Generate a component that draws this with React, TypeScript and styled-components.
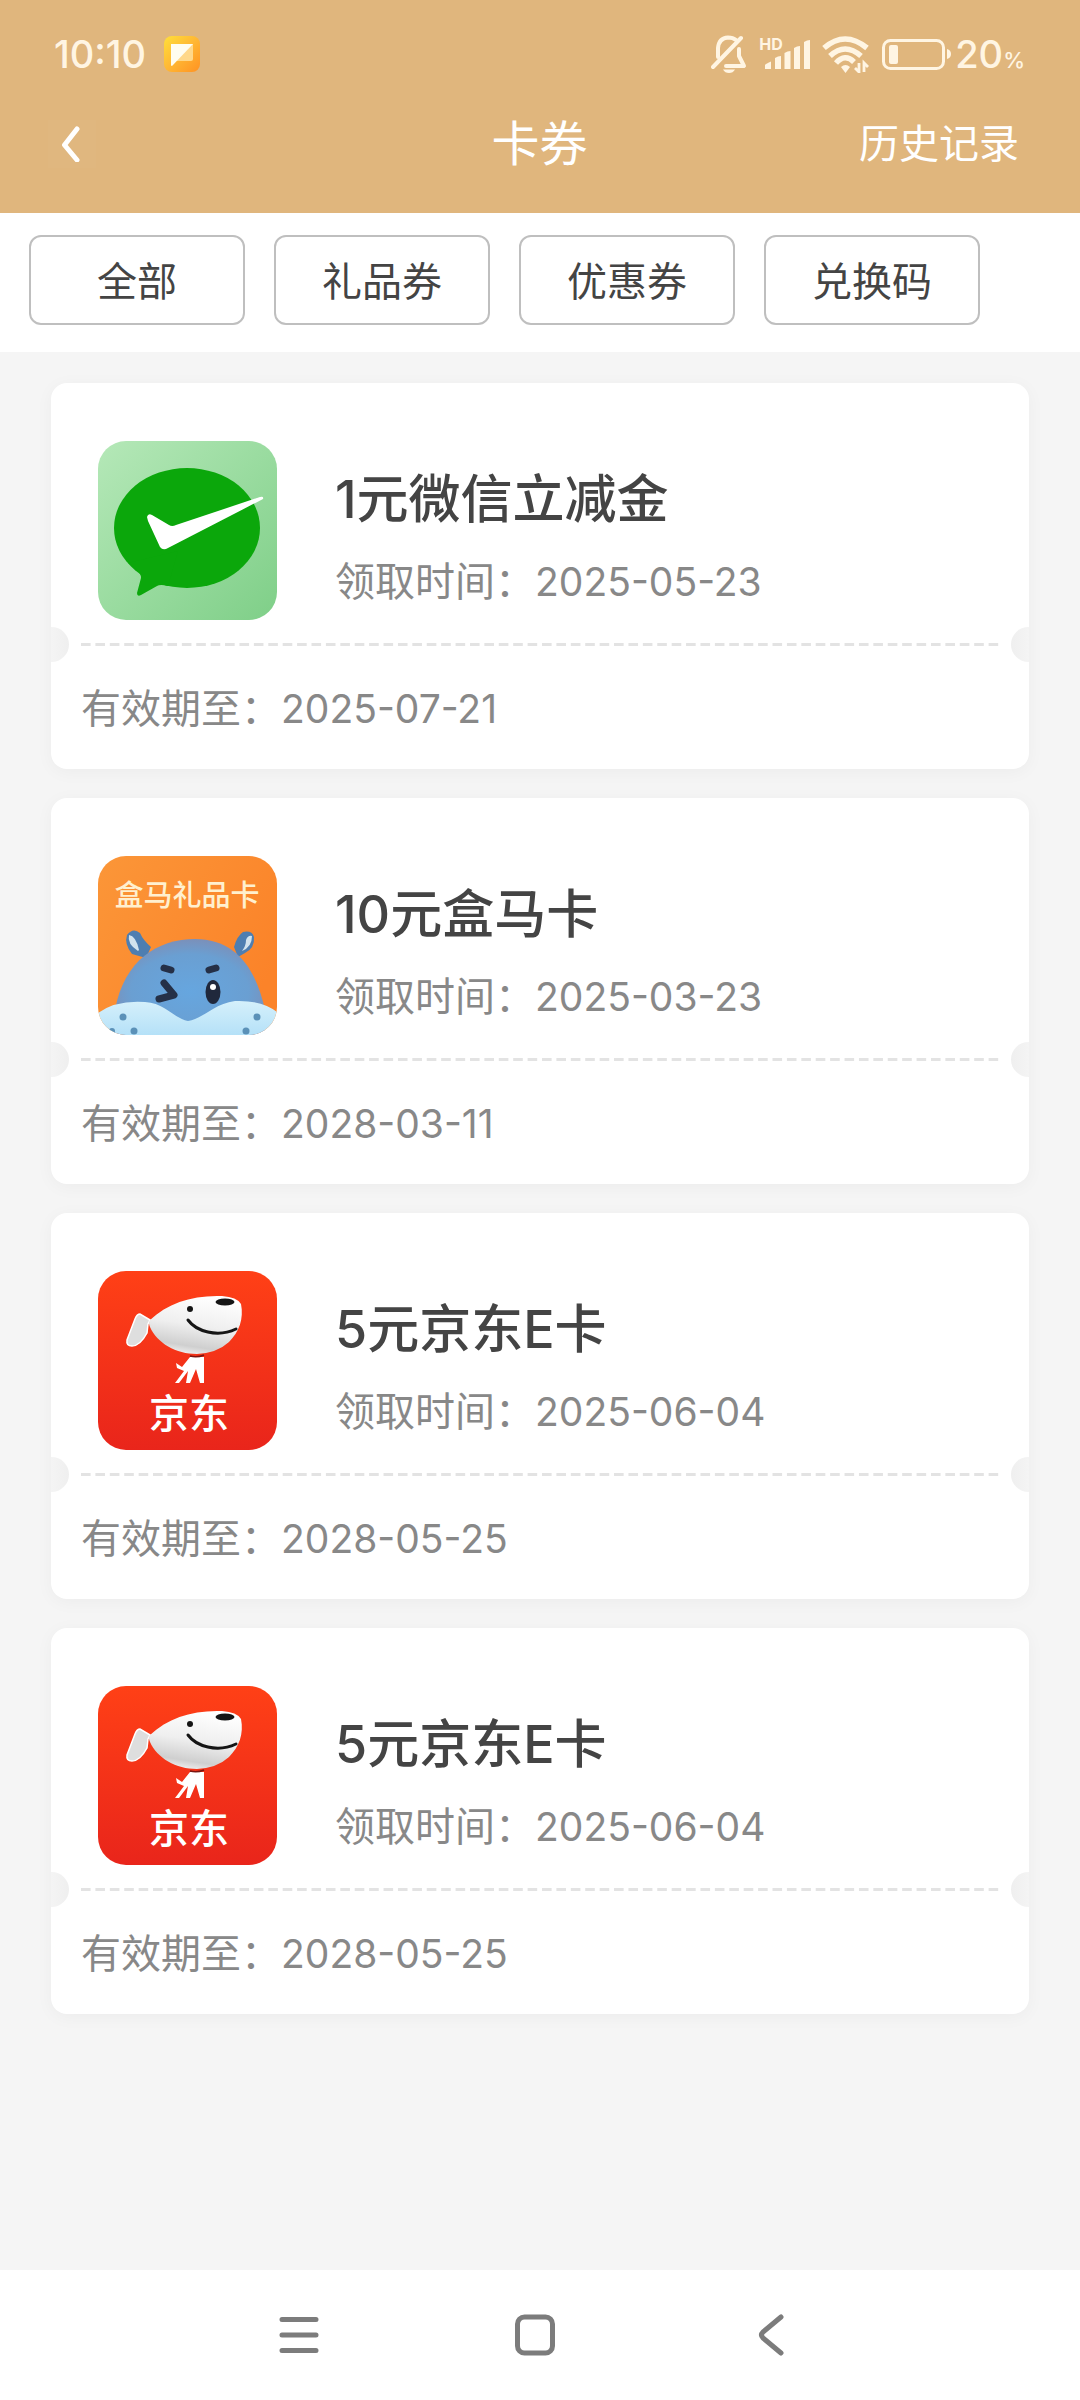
import React from 'react';
import styled, { createGlobalStyle } from 'styled-components';

const GlobalStyle = createGlobalStyle`
  *, *::before, *::after { box-sizing: border-box; }
  body {
    margin: 0;
    background: #f5f5f5;
    font-family: Inter, "Noto Sans CJK SC", sans-serif;
    color: #444;
  }
  h1, h2, p, ul { margin: 0; padding: 0; }
  ul { list-style: none; }
  button { font: inherit; color: inherit; background: none; border: 0; padding: 0; cursor: pointer; }
  svg { display: block; flex: none; }
`;

const Page = styled.div`
  min-height: 100vh;
  display: flex;
  flex-direction: column;
`;

const Header = styled.header`
  background: #e0b67d;
  padding-bottom: 33px;
`;

const StatusBar = styled.div`
  height: 108px;
  padding: 0 55px 0 54px;
  display: flex;
  align-items: center;
  justify-content: space-between;
  color: #fff5e3;
`;

const StatusGroup = styled.div<{ $gap: number }>`
  display: flex;
  align-items: center;
  gap: ${(p) => p.$gap}px;
`;

const Clock = styled.time`
  font-size: 38px;
  line-height: 48px;
  font-weight: 500;
`;

const Signal = styled.span`
  position: relative;
  display: block;
`;

const HdMark = styled.span`
  position: absolute;
  left: 0;
  top: -2px;
  font-size: 16px;
  line-height: 16px;
  font-weight: 700;
`;

const BatteryLevel = styled.span`
  display: flex;
  align-items: baseline;
  font-size: 38px;
  line-height: 48px;
  font-weight: 500;
  margin-left: -8px;
`;

const Percent = styled.small`
  font-size: 22px;
  line-height: 24px;
`;

const NavBar = styled.div`
  height: 72px;
  padding: 0 61px 0 48px;
  display: grid;
  grid-template-columns: 1fr auto 1fr;
  align-items: center;
  color: #fff;
`;

const BackButton = styled.button`
  width: 48px;
  height: 48px;
  display: grid;
  place-items: center;
  background: rgba(255, 255, 255, 0.02);
`;

const PageTitle = styled.h1`
  font-size: 48px;
  line-height: 64px;
  font-weight: 400;
  padding-left: 12px;
`;

const HistoryLink = styled.a`
  justify-self: end;
  color: inherit;
  text-decoration: none;
  font-size: 40px;
  line-height: 56px;
`;

const Filters = styled.nav`
  background: #fff;
  padding: 22px 29px 27px;
  display: flex;
  gap: 29px;
`;

const FilterButton = styled.button`
  flex: 0 1 216px;
  height: 90px;
  padding-top: 3px;
  border: 2px solid #bfbfbf;
  border-radius: 12px;
  font-size: 40px;
  line-height: 56px;
`;

const CouponList = styled.ul`
  flex: 1;
  padding: 31px 51px;
  display: flex;
  flex-direction: column;
  gap: 29px;
`;

const Card = styled.li`
  background: #fff;
  border-radius: 16px;
  box-shadow: 0 3px 18px rgba(0, 0, 0, 0.04);
`;

const CardMain = styled.div`
  padding: 58px 47px 23px;
  display: flex;
  align-items: flex-start;
  gap: 58px;
`;

const Logo = styled.div`
  flex: none;
  width: 179px;
  height: 179px;
  border-radius: 28px;
  overflow: hidden;
`;

const Info = styled.div`
  padding-top: 24px;
  display: flex;
  flex-direction: column;
  gap: 22px;
`;

const CardTitle = styled.h2`
  font-size: 52px;
  line-height: 70px;
  font-weight: 500;
`;

const Line = styled.p`
  display: flex;
  align-items: center;
  color: #888;
  font-size: 40px;
  line-height: 50px;
`;

const DateText = styled.time`
  font-size: 39px;
`;

const Tear = styled.div`
  position: relative;
  height: 3px;
  margin: 0 26px 0 30px;
  background: linear-gradient(90deg, #e3e3e3 70%, transparent 70%) 0 0 / calc(100% / 64) 100%;

  &::before,
  &::after {
    content: '';
    position: absolute;
    top: -16px;
    width: 18px;
    height: 35px;
  }
  &::before {
    left: -30px;
    border-radius: 0 18px 18px 0;
    background: linear-gradient(90deg, #f4f4f4, #efefef);
  }
  &::after {
    right: -26px;
    border-radius: 18px 0 0 18px;
    background: linear-gradient(90deg, #efefef, #f4f4f4);
  }
`;

const CardFoot = styled.div`
  height: 123px;
  padding: 2px 30px 0;
  display: flex;
  align-items: center;
`;

const SystemNav = styled.nav`
  background: #fff;
  height: 130px;
  padding: 0 191px 0 181px;
  display: grid;
  grid-template-columns: repeat(3, 1fr);
`;

const SystemButton = styled.button`
  display: grid;
  place-items: center;
`;

const AppBadge = () => (
  <svg width="36" height="36" viewBox="0 0 36 36" aria-hidden="true">
    <defs>
      <linearGradient id="badge" x1="0" y1="0" x2="1" y2="1">
        <stop offset="0" stopColor="#ffdf3a" />
        <stop offset="0.5" stopColor="#ffb734" />
        <stop offset="1" stopColor="#ff9222" />
      </linearGradient>
    </defs>
    <rect width="36" height="36" rx="8" fill="url(#badge)" />
    <path d="M7 8h22v15q0 2-2 2H13Z" fill="#ffd88a" />
    <path d="M7 8h22L8 30q-1 0-1-1Z" fill="#fffdf0" />
  </svg>
);

const BellOff = () => (
  <svg width="36" height="38" viewBox="0 0 36 38" fill="none" stroke="currentColor" strokeWidth="4" strokeLinecap="round" strokeLinejoin="round" aria-hidden="true">
    <path d="M30 3 2 32" />
    <path d="M7 22V13Q8 3 17 2.500Q22 2.500 25 5" />
    <path d="M28 14V21L33 31H15" />
    <path d="M12 34.500h12q-2 3.500-6 3.500t-6-3.500Z" fill="currentColor" stroke="none" />
  </svg>
);

const SignalBars = () => (
  <svg width="51" height="32" viewBox="0 0 51 32" fill="currentColor" aria-hidden="true">
    <path d="M6 31V27Q6 26 12 23.500V31Z" />
    <path d="M16 31V20q3-2 6-2V31Z" />
    <path d="M25.500 31V15q3-2 6-2V31Z" />
    <path d="M35 31V10q3-2 6-2V31Z" />
    <path d="M45 31V4q3-2 6-2V31Z" />
  </svg>
);

const Wifi = () => (
  <svg width="48" height="37" viewBox="0 0 48 37" fill="none" stroke="currentColor" strokeWidth="5.500" aria-hidden="true">
    <path d="M2 12Q23-6 45 12" />
    <path d="M8 20Q23 6 39 20" />
    <path d="M14 27Q23 17 32 26" />
    <path d="M19 31q4.500-4 9 0l-4.500 6Z" fill="currentColor" stroke="none" />
    <path d="M37 27v9l-4-4M42 36v-9l4 4" strokeWidth="2.800" />
  </svg>
);

const Battery = () => (
  <svg width="69" height="32" viewBox="0 0 69 32" aria-hidden="true">
    <rect x="1.500" y="2.500" width="60" height="28" rx="7" fill="none" stroke="currentColor" strokeWidth="3" />
    <rect x="7" y="7" width="9" height="19" rx="2" fill="currentColor" />
    <path d="M65 11q4 1 4 5t-4 5Z" fill="currentColor" />
  </svg>
);

const WeChatLogo = () => (
  <svg width="179" height="179" viewBox="0 0 179 179" role="img" aria-label="微信支付">
    <defs>
      <linearGradient id="wx" x1="0" y1="0" x2="1" y2="1">
        <stop offset="0" stopColor="#b5e8b8" />
        <stop offset="1" stopColor="#7fcf88" />
      </linearGradient>
    </defs>
    <rect width="179" height="179" fill="url(#wx)" />
    <ellipse cx="89" cy="87" rx="73" ry="60" fill="#0ba70b" />
    <path d="M30 122 Q44 132 43 137 L39 152 Q39 156 43 154 L59 145 Q62 143 70 145 L80 110Z" fill="#0ba70b" />
    <path d="M49 76q1-4 5-2l17 10q3 2 7 0l84-28q4-1 3 2L70 107q-5 3-8-1L50 80Z" fill="#fff" />
  </svg>
);

const HippoLogo = () => (
  <svg width="179" height="179" viewBox="0 0 179 179" role="img" aria-label="盒马礼品卡">
    <defs>
      <linearGradient id="hmBg" x1="0" y1="0" x2="1" y2="0.600">
        <stop offset="0" stopColor="#fb9638" />
        <stop offset="1" stopColor="#fb8329" />
      </linearGradient>
      <radialGradient id="hmHead" cx="0.500" cy="0.550" r="0.560">
        <stop offset="0" stopColor="#66a6df" />
        <stop offset="0.700" stopColor="#6a9fd2" />
        <stop offset="1" stopColor="#7c8fb8" />
      </radialGradient>
      <linearGradient id="hmMuzzle" x1="0" y1="0" x2="0" y2="1">
        <stop offset="0" stopColor="#d5f0fb" />
        <stop offset="1" stopColor="#b5e1f8" />
      </linearGradient>
    </defs>
    <rect width="179" height="179" fill="url(#hmBg)" />
    <path d="M48 102 34 98Q26 88 29 79Q35 71 42 77Q45 84 53 91Z" fill="#4e7eb1" />
    <path d="M40 95Q29 88 31 79Q38 80 41 94Z" fill="#d2e3ee" />
    <path d="M136 91Q139 80 145 76Q154 74 156 81Q157 92 147 97L140 101Z" fill="#4e7eb1" />
    <path d="M144 95Q154 91 154 80Q150 79 148 84Q148 90 144 95Z" fill="#d2e3ee" />
    <path d="M17 154C26 104 60 83 97 83C137 83 158 112 167 154V179H17Z" fill="url(#hmHead)" />
    <path d="M0 157Q18 144 47 146C67 147 75 162 90 165C107 162 115 148 137 145Q164 144 179 156V179H0Z" fill="url(#hmMuzzle)" />
    <g fill="none" stroke="#253047" strokeWidth="7" strokeLinecap="round" strokeLinejoin="round">
      <path d="M66 112l7 2M111 114l7-2" />
      <path d="M66 127 76 139 61 143" />
    </g>
    <ellipse cx="115" cy="136" rx="7.500" ry="12" fill="#20283c" />
    <circle cx="115" cy="131" r="3" fill="#fff" />
    <g fill="#5b91b8">
      <circle cx="25" cy="161" r="3.500" />
      <circle cx="36" cy="175" r="3.500" />
      <circle cx="14" cy="175" r="3" />
      <circle cx="159" cy="161" r="3.500" />
      <circle cx="148" cy="175" r="3.500" />
    </g>
    <text x="89" y="50" textAnchor="middle" fontSize="29" fontWeight="500" fill="#fff0cf">盒马礼品卡</text>
  </svg>
);

const JdLogo = () => (
  <svg width="179" height="179" viewBox="0 0 179 179" role="img" aria-label="京东">
    <defs>
      <linearGradient id="jdBg" x1="0" y1="0" x2="0" y2="1">
        <stop offset="0" stopColor="#ff4016" />
        <stop offset="1" stopColor="#e9251b" />
      </linearGradient>
      <linearGradient id="jdHead" x1="0.600" y1="0" x2="0.350" y2="1">
        <stop offset="0" stopColor="#fff" />
        <stop offset="0.500" stopColor="#efefef" />
        <stop offset="0.850" stopColor="#cfcfcf" />
        <stop offset="1" stopColor="#f1f1f1" />
      </linearGradient>
    </defs>
    <rect width="179" height="179" fill="url(#jdBg)" />
    <path d="M52 49 42 43Q39 43 37 48L29 69Q28 75 34 75Q42 75 49 62L50 53Z" fill="#dedede" stroke="#fff" strokeWidth="1.500" />
    <path d="M52 49C70 32 94 24 124 25Q139 26 143 33C146 48 141 61 131 71Q119 82 99 83C78 83 59 72 52 56Q50 52 52 49Z" fill="url(#jdHead)" />
    <path d="M92 86h14v26h-4l-4-14-6 14h-4l2-12-9 12h-4l9-12-7-3-1-5 6 4Z" fill="#fff" />
    <path d="M92 85Q99 87 106 84" fill="none" stroke="#7a1510" strokeWidth="1.500" />
    <circle cx="92" cy="38" r="3" fill="#151515" />
    <ellipse cx="127" cy="31" rx="9.500" ry="3.500" fill="#151515" />
    <path d="M90 49C98 60 119 67 138 58" fill="none" stroke="#151515" strokeWidth="3" strokeLinecap="round" />
    <text x="91" y="157" textAnchor="middle" fontSize="40" fontWeight="500" fill="#fff">京东</text>
  </svg>
);

interface Coupon {
  id: number;
  title: string;
  received: string;
  expires: string;
  Icon: React.FC;
}

const coupons: Coupon[] = [
  { id: 1, title: '1元微信立减金', received: '2025-05-23', expires: '2025-07-21', Icon: WeChatLogo },
  { id: 2, title: '10元盒马卡', received: '2025-03-23', expires: '2028-03-11', Icon: HippoLogo },
  { id: 3, title: '5元京东E卡', received: '2025-06-04', expires: '2028-05-25', Icon: JdLogo },
  { id: 4, title: '5元京东E卡', received: '2025-06-04', expires: '2028-05-25', Icon: JdLogo },
];

const filters = ['全部', '礼品券', '优惠券', '兑换码'];

const CouponCard = ({ title, received, expires, Icon }: Coupon) => (
  <Card>
    <CardMain>
      <Logo>
        <Icon />
      </Logo>
      <Info>
        <CardTitle>{title}</CardTitle>
        <Line>
          领取时间：<DateText dateTime={received}>{received}</DateText>
        </Line>
      </Info>
    </CardMain>
    <Tear />
    <CardFoot>
      <Line>
        有效期至：<DateText dateTime={expires}>{expires}</DateText>
      </Line>
    </CardFoot>
  </Card>
);

export default function App() {
  return (
    <Page>
      <GlobalStyle />
      <Header>
        <StatusBar>
          <StatusGroup $gap={18}>
            <Clock>10:10</Clock>
            <AppBadge />
          </StatusGroup>
          <StatusGroup $gap={12}>
            <BellOff />
            <Signal>
              <HdMark>HD</HdMark>
              <SignalBars />
            </Signal>
            <Wifi />
            <Battery />
            <BatteryLevel>
              20<Percent>%</Percent>
            </BatteryLevel>
          </StatusGroup>
        </StatusBar>
        <NavBar>
          <BackButton aria-label="返回">
            <svg width="20" height="36" viewBox="0 0 20 36" fill="none" stroke="currentColor" strokeWidth="5" strokeLinecap="round" strokeLinejoin="round">
              <path d="M15 3 2.500 19l12.500 15" />
            </svg>
          </BackButton>
          <PageTitle>卡券</PageTitle>
          <HistoryLink href="#history">历史记录</HistoryLink>
        </NavBar>
      </Header>
      <Filters>
        {filters.map((name) => (
          <FilterButton key={name}>{name}</FilterButton>
        ))}
      </Filters>
      <CouponList>
        {coupons.map((coupon) => (
          <CouponCard key={coupon.id} {...coupon} />
        ))}
      </CouponList>
      <SystemNav>
        <SystemButton aria-label="最近任务">
          <svg width="40" height="40" viewBox="0 0 40 40" stroke="#7c7c7c" strokeWidth="5" strokeLinecap="round">
            <path d="M3 4.500h34M3 20h34M3 35.500h34" />
          </svg>
        </SystemButton>
        <SystemButton aria-label="主屏幕">
          <svg width="40" height="42" viewBox="0 0 40 42" fill="none" stroke="#7c7c7c" strokeWidth="5">
            <rect x="2.500" y="3" width="35" height="36" rx="7" />
          </svg>
        </SystemButton>
        <SystemButton aria-label="返回上一级">
          <svg width="26" height="42" viewBox="0 0 26 42" fill="none" stroke="#7c7c7c" strokeWidth="5" strokeLinecap="round" strokeLinejoin="round">
            <path d="M23 3 5 18q-3 3 0 6L23 39" />
          </svg>
        </SystemButton>
      </SystemNav>
    </Page>
  );
}
